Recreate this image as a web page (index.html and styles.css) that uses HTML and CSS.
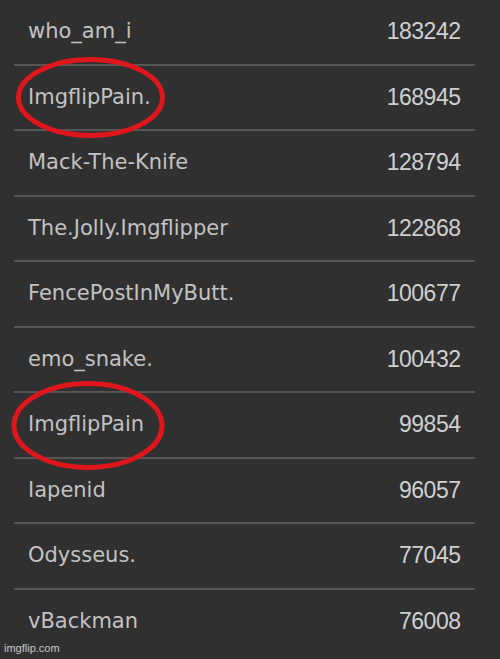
FILE: index.html
```html
<!DOCTYPE html>
<html>
<head>
<meta charset="utf-8">
<link rel="stylesheet" href="styles.css">
</head>
<body>
<div class="page">
  <ul class="board">
    <li class="row"><span class="name">who_am_i</span><span class="score">183242</span></li>
    <li class="row"><span class="name">ImgflipPain.</span><span class="score">168945</span></li>
    <li class="row"><span class="name">Mack-The-Knife</span><span class="score">128794</span></li>
    <li class="row"><span class="name">The.Jolly.Imgflipper</span><span class="score">122868</span></li>
    <li class="row"><span class="name">FencePostInMyButt.</span><span class="score">100677</span></li>
    <li class="row"><span class="name">emo_snake.</span><span class="score">100432</span></li>
    <li class="row"><span class="name">ImgflipPain</span><span class="score">99854</span></li>
    <li class="row"><span class="name">Iapenid</span><span class="score">96057</span></li>
    <li class="row"><span class="name">Odysseus.</span><span class="score">77045</span></li>
    <li class="row last"><span class="name">vBackman</span><span class="score">76008</span></li>
  </ul>
  <svg class="marks" width="500" height="659" viewBox="0 0 500 659">
    <ellipse cx="90.5" cy="97.5" rx="72" ry="38" />
    <ellipse cx="88" cy="425.5" rx="74" ry="42" />
  </svg>
  <div class="watermark">imgflip.com</div>
</div>
</body>
</html>
```
FILE: styles.css
```css
html, body {
  margin: 0;
  padding: 0;
  background: #303030;
}
.page {
  position: relative;
  width: 500px;
  height: 659px;
  overflow: hidden;
  background: #303030;
}
.board {
  list-style: none;
  margin: 0;
  padding: 0 0 0 14px;
  width: 461px;
}
.row {
  display: flex;
  align-items: center;
  justify-content: space-between;
  height: 63.5px;
  border-bottom: 2px solid #565656;
  padding: 0 14.5px 0 14px;
}
.row.last {
  border-bottom: none;
}
.name {
  font-family: "DejaVu Sans", Verdana, sans-serif;
  font-size: 21px;
  color: #c2c2c2;
  margin-top: -1px;
}
.score {
  font-family: "Liberation Sans", Arial, sans-serif;
  font-size: 23px;
  letter-spacing: -0.5px;
  color: #cfcfcf;
}
.marks {
  position: absolute;
  left: 0;
  top: 0;
  pointer-events: none;
}
.marks ellipse {
  fill: none;
  stroke: #e0161d;
  stroke-width: 5;
}
.watermark {
  position: absolute;
  left: 4px;
  bottom: 5px;
  font-family: "Liberation Sans", Arial, sans-serif;
  font-size: 11px;
  color: #c8c8c8;
}
```
